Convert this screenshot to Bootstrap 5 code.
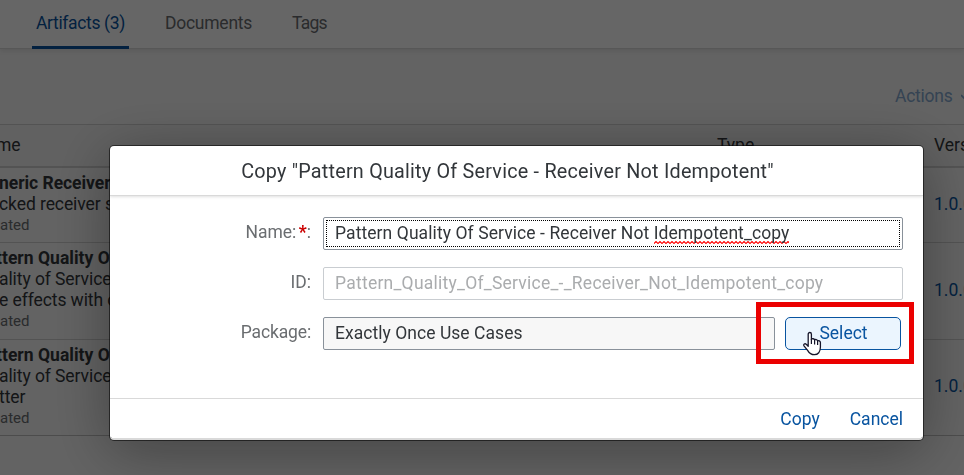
<!DOCTYPE html>
<html lang="en">
<head>
<meta charset="utf-8">
<title>Copy artifact</title>
<meta name="viewport" content="width=device-width, initial-scale=1">
<link href="https://cdn.jsdelivr.net/npm/bootstrap@5.3.0/dist/css/bootstrap.min.css" rel="stylesheet">
<style>
html, body { height: 475px; overflow: hidden; }
body { font-family: Roboto, "Liberation Sans", sans-serif; font-size: 17.5px; line-height: 21px; color: #32363a; background: #f7f7f7; }
.app-tabs { height: 49px; padding-left: 32px; gap: 32px; background: #fff; border-bottom: 1px solid #d9d9d9; box-shadow: 0 2px 5px rgba(0,0,0,.09); }
.app-tabs .nav-link { height: 49px; padding: 13px 4px 0; color: #6a6d70; border-radius: 0; }
.app-tabs .nav-link.active { color: #0854a0; border-bottom: 3px solid #0854a0; border-radius: 2px 2px 0 0; }
.app-tools { height: 75px; padding: 21px 0 0 895px; gap: 9px; color: #84a9cf; }
.artifact-row { display: grid; grid-template-columns: 717px 217px 30px; border-top: 1px solid #d0d0d0; overflow: hidden; white-space: nowrap; }
.row-head { height: 43px; background: #f2f2f2; align-items: center; border-bottom: 1px solid #cfcfcf; }
.row-head .first { margin-left: -4px; }
.row-a { height: 75px; } .row-b { height: 97px; } .row-c { height: 97px; border-bottom: 1px solid #bfbfbf; }
.artifact-row .info { padding-top: 5px; line-height: 21px; }
.artifact-row .state { font-size: 15px; color: #6a6d70; }
.artifact-row .desc { margin-left: -1px; letter-spacing: -.08px; }
.artifact-row .heading { margin-left: -1px; letter-spacing: -.05px; }
.artifact-row .heading-cut { margin-left: -4px; letter-spacing: .02px; }
.version { color: #0854a0; align-self: center; padding-bottom: 2px; }
.modal-backdrop { --bs-backdrop-opacity: .6; width: 100%; height: 100%; }
.copy-dialog { width: 813px; max-width: none; margin: 146px 0 0 110px; }
.copy-dialog .modal-content { height: 294px; border: 0; border-radius: 4px; color: #32363a; box-shadow: 0 0 0 1px rgba(0,0,0,.55), 0 10px 60px rgba(0,0,0,.35); border-bottom: 2px solid #d9d9d9; }
.copy-dialog .modal-header { height: 50px; padding: 2px 18px 0 0; border-bottom: 1px solid #d9d9d9; border-radius: 4px 4px 0 0; box-shadow: 0 1px 3px rgba(0,0,0,.12); }
.copy-dialog .modal-title { font-size: 19.8px; line-height: 24px; font-weight: 400; letter-spacing: .22px; }
.copy-dialog .modal-body { padding: 21px 20px 0 0; }
.form-line { display: grid; grid-template-columns: 201px 1fr; column-gap: 12px; height: 50px; }
.form-line label { text-align: right; padding-top: 5px; color: #6a6d70; }
.field { height: 33px; padding: 0 11px; border: 1px solid #89919a; border-radius: 2px; line-height: 31px; color: #32363a; white-space: nowrap; }
.field-focus { outline: 1px dotted #000; outline-offset: -4px; letter-spacing: .08px; }
.field-off { border-color: #c9cdd1; color: #aaacae; letter-spacing: .24px; }
.field-ro { background: #f7f7f7; width: 452px; letter-spacing: .04px; }
.misspelt { display: inline-block; line-height: 21px; background: url("data:image/svg+xml,%3Csvg xmlns='http://www.w3.org/2000/svg' width='4' height='3'%3E%3Cpath d='M-1 1.5L0 2.5L2 .5L4 2.5L5 1.5' fill='none' stroke='%23f00' stroke-width='1.1'/%3E%3C/svg%3E") 0 100% repeat-x; }
.star { color: #c00; font-weight: 700; margin-left: 2.5px; }
.btn-pick { width: 116px; height: 33px; padding: 0 0 0 1px; margin-left: 10px; border: 1px solid #0854a0; border-radius: 5px; background: #ebf5fe; color: #0854a0; font-size: 17.5px; }
.copy-dialog .modal-footer { height: 40px; padding: 1px 20px 0 0; gap: 30px; border-top: 1px solid #d9d9d9; }
.copy-dialog .modal-footer .btn { margin: 0; padding: 0; border: 0; color: #0854a0; font-size: 17.5px; line-height: 21px; }
.highlight-frame { position: absolute; left: 756px; top: 302px; width: 158px; height: 62px; border: 5px solid #eb0000; pointer-events: none; }
.pointer { position: absolute; left: 803px; top: 331px; }
.s-art { letter-spacing: -.35px; }
.s-doc, .s-act { letter-spacing: -.25px; }
.s-tag { letter-spacing: -.8px; }
.s-pkg { letter-spacing: -.15px; }
</style>
<script src="https://cdn.jsdelivr.net/npm/bootstrap@5.3.0/dist/js/bootstrap.bundle.min.js"></script>
</head>
<body>
<nav class="nav app-tabs">
  <a class="nav-link active" href="#"><span class="s-art">Artifacts (3)</span></a>
  <a class="nav-link" href="#"><span class="s-doc">Documents</span></a>
  <a class="nav-link" href="#"><span class="s-tag">Tags</span></a>
</nav>
<div class="app-tools d-flex text-nowrap overflow-hidden align-items-start"><span class="pt-3 s-act">Actions</span>
  <svg class="flex-shrink-0 mt-4" width="11" height="7" viewBox="0 0 11 7"><path d="M0 1l5 5 5-5" fill="none" stroke="#84a9cf" stroke-width="1.6"/></svg>
</div>
<main>
  <div class="artifact-row row-head"><span class="first">me</span><span>Type</span><span>Version</span></div>
  <div class="artifact-row row-a">
    <div class="info"><div class="fw-bold heading">neric Receiver</div><div class="desc">cked receiver s</div><div class="state">ated</div></div><span></span><span class="version">1.0.0</span>
  </div>
  <div class="artifact-row row-b">
    <div class="info"><div class="fw-bold heading-cut">ttern Quality Of</div><div class="desc">ality of Service</div><div class="desc">e effects with c</div><div class="state">ated</div></div><span></span><span class="version">1.0.0</span>
  </div>
  <div class="artifact-row row-c">
    <div class="info"><div class="fw-bold heading-cut">ttern Quality Of</div><div class="desc">ality of Service</div><div class="desc">tter</div><div class="state">ated</div></div><span></span><span class="version">1.0.0</span>
  </div>
</main>
<div class="modal-backdrop show"></div>
<div class="modal d-block overflow-hidden" role="dialog">
  <div class="modal-dialog copy-dialog">
    <div class="modal-content">
      <div class="modal-header justify-content-center"><h1 class="modal-title">Copy "Pattern Quality Of Service - Receiver Not Idempotent"</h1></div>
      <div class="modal-body">
        <div class="form-line"><label>Name:<span class="star">*</span>:</label><div class="field field-focus">Pattern Quality Of Service - Receiver Not <span class="misspelt">Idempotent_copy</span></div></div>
        <div class="form-line"><label>ID:</label><div class="field field-off">Pattern_Quality_Of_Service_-_Receiver_Not_Idempotent_copy</div></div>
        <div class="form-line"><label><span class="s-pkg">Package:</span></label><div class="d-flex"><div class="field field-ro">Exactly Once Use Cases</div><button class="btn btn-pick" type="button">Select</button></div></div>
      </div>
      <div class="modal-footer"><button class="btn" type="button">Copy</button><button class="btn" type="button">Cancel</button></div>
    </div>
  </div>
  <div class="highlight-frame"></div>
  <svg class="pointer" width="20" height="26" viewBox="0 0 20 26"><path d="M5.2 15.2V3.2C5.2.9 8.4.9 8.4 3.2V8.5C9 7.3 11.4 7.5 11.6 9 12.4 8 14.4 8.4 14.6 10 15.6 9.2 17.4 9.9 17.4 11.5V16C17.4 21 15 23.7 11.3 23.7 8 23.7 6.5 22.5 4.8 19.6L1 14.8C.1 13.3 1.9 12.2 3.2 13.2Z" fill="#fff" stroke="#15152a" stroke-width="1.3" stroke-linejoin="round"/><path d="M8.4 8v5M11.6 9v4.5M14.6 10v4" stroke="#15152a" stroke-width="1.2" fill="none"/></svg>
</div>
</body>
</html>
